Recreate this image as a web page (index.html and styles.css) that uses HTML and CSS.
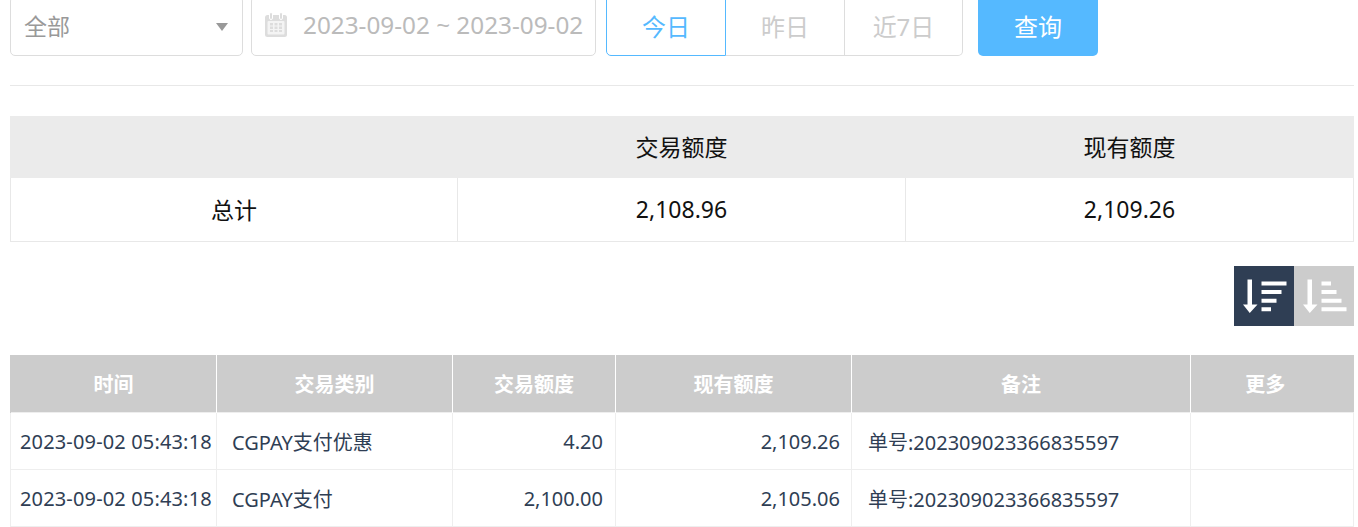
FILE: index.html
```html
<!DOCTYPE html>
<html lang="zh-CN">
<head>
<meta charset="utf-8">
<title>交易记录</title>
<link rel="stylesheet" href="styles.css">
</head>
<body>
<main class="page">
  <form class="filters">
    <div class="select"><span>全部</span><i class="caret"></i></div>
    <div class="dates">
      <svg class="cal" width="22" height="25" viewBox="0 0 22 25"><rect y="3" width="22" height="22" rx="2.500" fill="#ddd"/><rect x="2.500" y="9" width="17" height="13.500" rx="1" fill="#f4f4f4"/><path fill="#ddd" d="M5 11h3v2.500H5zM9.500 11h3v2.500h-3zM14 11h3v2.500h-3zM5 14.500h3V17H5zM9.500 14.500h3V17h-3zM14 14.500h3V17h-3zM5 18h3v2H5zM9.500 18h3v2h-3zM14 18h3v2h-3z"/><path fill="#ddd" stroke="#fff" d="M4.500 2a1.500 1.500 0 0 1 3 0v4a1.500 1.500 0 0 1-3 0zM14.500 2a1.500 1.500 0 0 1 3 0v4a1.500 1.500 0 0 1-3 0z"/></svg>
      <span>2023-09-02 ~ 2023-09-02</span>
    </div>
    <div class="range">
      <button type="button" class="tab tab-on">今日</button>
      <button type="button" class="tab">昨日</button>
      <button type="button" class="tab">近7日</button>
    </div>
    <button type="button" class="query">查询</button>
  </form>
  <hr class="rule">
  <table class="summary">
    <colgroup><col class="s1"><col class="s2"><col class="s3"></colgroup>
    <thead><tr><th></th><th>交易额度</th><th>现有额度</th></tr></thead>
    <tbody><tr><td>总计</td><td>2,108.96</td><td>2,109.26</td></tr></tbody>
  </table>
  <div class="sorts">
    <button type="button" class="sort sort-on" aria-label="降序">
      <svg width="60" height="60" viewBox="0 0 60 60"><path fill="#fff" d="M13.500 13.500h4.500V38.500h5.500l-7.750 8.500L9 38.500h4.500zM27.500 15.500h25v4h-25zM27.500 24h20v4h-20zM27.500 32.700h15v4h-15zM27.500 41.300h9.500v4h-9.500z"/></svg>
    </button>
    <button type="button" class="sort" aria-label="升序">
      <svg width="60" height="60" viewBox="0 0 60 60"><path fill="#fff" d="M13.500 13.500h4.500V38.500h5.500l-7.750 8.500L9 38.500h4.500zM27.500 15.500h9.500v4h-9.500zM27.500 24h15v4h-15zM27.500 32.700h20v4h-20zM27.500 41.300h25v4h-25z"/></svg>
    </button>
  </div>
  <table class="detail">
    <colgroup><col class="c1"><col class="c2"><col class="c3"><col class="c4"><col class="c5"><col class="c6"></colgroup>
    <thead><tr><th>时间</th><th>交易类别</th><th>交易额度</th><th>现有额度</th><th>备注</th><th class="more">更多</th></tr></thead>
    <tbody>
      <tr><td class="time">2023-09-02 05:43:18</td><td class="kind">CGPAY支付优惠</td><td class="num">4.20</td><td class="num num2">2,109.26</td><td class="note">单号:202309023366835597</td><td></td></tr>
      <tr><td class="time">2023-09-02 05:43:18</td><td class="kind">CGPAY支付</td><td class="num">2,100.00</td><td class="num num2">2,105.06</td><td class="note">单号:202309023366835597</td><td></td></tr>
    </tbody>
  </table>
</main>
</body>
</html>
```
FILE: styles.css
```css
* { box-sizing: border-box; }
html, body { margin: 0; height: 527px; overflow: hidden; background: #fff; }
body { font-family: "Noto Sans", "Noto Sans CJK SC", sans-serif; }
.page { margin: -4px 4px 0 10px; }
.filters { display: flex; height: 60px; }
.select, .dates {
  display: flex; align-items: center; height: 60px;
  border: 1px solid #ddd; border-radius: 5px;
  background: #fff;
}
.select { width: 233px; padding: 0 13px; justify-content: space-between; font-size: 23px; line-height: 60px; color: #999; }
.caret { border: 6px solid transparent; border-top: 8px solid #999; border-bottom: 0; margin: 2px 1px 0 0; }
.dates { width: 345px; margin-left: 8px; padding-left: 13px; font-size: 24.300px; color: #bbb; }
.dates span { margin-top: -3px; }
.cal { margin: -4px 16px 0 0; flex: none; }
.range { display: flex; margin-left: 10px; }
.tab {
  width: 119px; height: 60px; padding: 0 0 2px; background: #fff;
  border: 1px solid #ddd; border-left: 0;
  font: inherit; font-size: 24px; color: #ccc;
}
.tab:first-child { width: 120px; border-radius: 0 0 0 5px; border: 1px solid #55b9ff; color: #55b9ff; }
.tab:last-child { width: 118px; border-radius: 0 5px 5px 0; }
.query {
  width: 120px; height: 60px; margin-left: 15px; padding: 0 0 2px;
  background: #55b9ff; border: 0; border-radius: 5px;
  font: inherit; font-size: 24px; color: #fff;
}
.rule { height: 1px; margin: 29px 0 30px; border: 0; background: #e8e8e8; }
table { width: 100%; border-collapse: collapse; table-layout: fixed; }
.summary { font-size: 23px; color: #111; text-align: center; }
.s1 { width: 447px; } .s2 { width: 448px; }
.summary th { height: 61px; padding: 0 0 2px; font-weight: 400; background: #ebebeb; border: 1px solid #ebebeb; }
.summary td { height: 64px; padding: 0 0 2px; border: 1px solid #e8e8e8; }
.sorts { display: flex; justify-content: flex-end; margin: 24px 0 29px; }
.sort { display: block; width: 60px; height: 60px; padding: 0; border: 0; background: #ccc; }
.sort svg { display: block; }
.sort-on { background: #2f3e54; }
.detail { font-size: 20px; color: #2f3e54; }
.c1 { width: 206px; } .c2 { width: 236px; } .c3 { width: 163px; }
.c4 { width: 236px; } .c5 { width: 339px; }
.detail th {
  height: 57px; padding: 0; background: #ccc; color: #fff;
  font-size: 20px; font-weight: 700; text-align: center;
  border-left: 1px solid #fff;
}
.detail th:first-child { border-left: 1px solid #ccc; }
.detail th.more { padding-right: 14px; }
.detail td { height: 57px; padding: 1px 0 0; border: 1px solid #eee; white-space: nowrap; }
.detail td.time { padding-left: 9px; letter-spacing: 0.150px; }
.detail td.kind { padding-left: 15px; }
.detail td.num { text-align: right; padding-right: 12px; }
.detail td.num2 { padding-right: 11px; }
.detail td.note { padding-left: 16px; }
```
